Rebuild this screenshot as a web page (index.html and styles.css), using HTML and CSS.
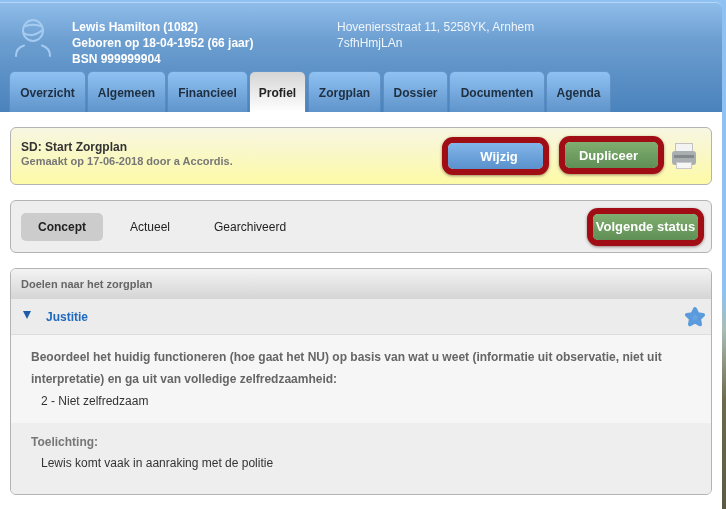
FILE: index.html
```html
<!DOCTYPE html>
<html lang="nl">
<head>
  <meta charset="UTF-8">
  <meta name="viewport" content="width=device-width, initial-scale=1">
  <title>Zorgplan</title>
  <link rel="stylesheet" href="styles.css">
</head>
<body>

<div class="app">
  <header class="top">
    <div class="head">
      <div class="client">
        <svg class="avatar" width="40" height="40" viewBox="0 0 40 40" fill="none" stroke="#a5cbf0" stroke-width="2">
          <ellipse cx="20" cy="11.500" rx="10" ry="10.500"/>
          <path d="M11 7.500c5-2.500 13-2.500 18 0M10.500 14c6 3.500 13 2 19-3"/>
          <path d="M3 37c0-6 3-9 8-10.500M37 37c0-6-3-9-8-10.500" stroke-linecap="round"/>
        </svg>
        <div class="client-name">
          <div>Lewis Hamilton (1082)</div>
          <div>Geboren op 18-04-1952 (66 jaar)</div>
          <div>BSN 999999904</div>
        </div>
        <div class="client-address">
          <div>Hoveniersstraat 11, 5258YK, Arnhem</div>
          <div>7sfhHmjLAn</div>
        </div>
      </div>
      <nav class="tabs">
        <a class="tab tab-overzicht">Overzicht</a>
        <a class="tab tab-algemeen">Algemeen</a>
        <a class="tab tab-financieel">Financieel</a>
        <a class="tab tab-profiel active">Profiel</a>
        <a class="tab tab-zorgplan">Zorgplan</a>
        <a class="tab tab-dossier">Dossier</a>
        <a class="tab tab-documenten">Documenten</a>
        <a class="tab tab-agenda">Agenda</a>
      </nav>
    </div>
  </header>

  <main class="content">
    <section class="card plan">
      <div class="plan-text">
        <h2>SD: Start Zorgplan</h2>
        <p>Gemaakt op 17-06-2018 door a Accordis.</p>
      </div>
      <button class="btn blue btn-wijzig">Wijzig</button>
      <button class="btn green btn-dupliceer">Dupliceer</button>
      <svg class="printer" width="24" height="26" viewBox="0 0 24 26">
        <rect x="3.500" y=".5" width="17" height="10" fill="#f3f3f3" stroke="#c2c2c2"/>
        <rect x="0" y="8" width="24" height="14" rx="3" fill="#a9aeb1"/>
        <rect x="2" y="12" width="20" height="3" fill="#83888c"/>
        <rect x="4.500" y="19.500" width="15" height="6" fill="#f6f6f6" stroke="#c9c9c9"/>
      </svg>
    </section>

    <section class="card status">
      <a class="status-item current">Concept</a>
      <a class="status-item actueel">Actueel</a>
      <a class="status-item">Gearchiveerd</a>
      <button class="btn green btn-volgende">Volgende status</button>
    </section>

    <section class="card goals">
      <div class="goals-head">Doelen naar het zorgplan</div>
      <div class="goal-title">
        <span class="arrow"></span>
        <span class="goal-name">Justitie</span>
        <svg class="star" width="22" height="21" viewBox="0 0 22 21">
          <path d="M11 3l2.500 5.200 5.500.7-4 3.900 1 5.500-5-2.700-5 2.700 1-5.500-4-3.900 5.500-.7z" fill="#66a3e0" stroke="#5b9bdc" stroke-width="4" stroke-linejoin="round"/>
        </svg>
      </div>
      <div class="question">
        <p class="label">Beoordeel het huidig functioneren (hoe gaat het NU) op basis van wat u weet (informatie uit observatie, niet uit interpretatie) en ga uit van volledige zelfredzaamheid:</p>
        <p class="answer">2 - Niet zelfredzaam</p>
      </div>
      <div class="note">
        <p class="note-label">Toelichting:</p>
        <p class="answer">Lewis komt vaak in aanraking met de politie</p>
      </div>
    </section>
  </main>
</div>

<div class="desktop"></div>

</body>
</html>
```

FILE: styles.css
```css
html, body {
  height: 100%;
}
body {
  margin: 0;
  display: flex;
  overflow: hidden;
  background: #fff;
  font-family: "Liberation Sans", Arial, sans-serif;
  font-size: 12px;
  color: #333;
}
.app {
  width: 722px;
  flex: none;
  filter: blur(.3px);
}
.desktop {
  flex: 1;
  background: linear-gradient(#8fc1f2 0, #8fc1f2 290px, #a9bdb4 330px, #6d6b4c 400px, #5c5a42 509px);
}

/* header */
.top {
  height: 112px;
  padding-top: 2px;
  box-sizing: border-box;
  background: #8fc1f2;
}
.head {
  height: 110px;
  box-sizing: border-box;
  border-top: 1px solid #b5d6f6;
  border-top-right-radius: 6px;
  background: linear-gradient(#8fbdea, #6c9ed0 38px, #4a82bc 110px);
  display: flex;
  flex-direction: column;
}
.client {
  flex: 1;
  display: flex;
  padding: 16px 0 0 13px;
  line-height: 16px;
  color: #fff;
}
.avatar {
  flex: none;
}
.client-name {
  width: 265px;
  margin-left: 19px;
  font-weight: bold;
}
.client-address {
  color: #eef5fc;
}
.tabs {
  display: flex;
  height: 40px;
  padding-left: 10px;
}
.tab {
  display: block;
  box-sizing: border-box;
  padding-top: 14px;
  margin-right: 3px;
  border-radius: 5px 5px 0 0;
  text-align: center;
  font-weight: bold;
  color: #1f2f40;
  background: linear-gradient(#8fc1f3, #5f94ca);
  box-shadow: 0 0 1px rgba(255, 255, 255, .5);
}
.tab-overzicht { width: 75px; }
.tab-algemeen { width: 77px; }
.tab-financieel { width: 79px; }
.tab-profiel { width: 55px; margin-right: 4px; }
.tab-zorgplan { width: 71px; margin-right: 4px; }
.tab-dossier { width: 63px; }
.tab-documenten { width: 94px; }
.tab-agenda { width: 63px; }
.tab.active {
  color: #222;
  background: linear-gradient(#d5d5d5, #fff);
}

/* cards */
.content {
  padding: 15px 10px 0;
}
.card {
  border: 1px solid #b3b3b3;
  border-radius: 6px;
  box-sizing: border-box;
  margin-bottom: 15px;
}
.plan {
  height: 58px;
  display: flex;
  align-items: center;
  background: linear-gradient(#f7f6e2, #fdfaa6);
}
.plan-text {
  flex: 1;
  padding: 0 0 4px 10px;
}
.plan-text h2 {
  margin: 0;
  font-size: 12px;
  line-height: 15px;
  color: #333;
}
.plan-text p {
  margin: 0;
  font-size: 11px;
  line-height: 13px;
  font-weight: bold;
  color: #777;
}
.btn {
  display: block;
  box-sizing: border-box;
  height: 26px;
  padding: 0;
  border: none;
  border-radius: 5px;
  color: #fff;
  font: bold 13px "Liberation Sans", Arial, sans-serif;
  box-shadow: 0 0 0 6px #a10d15, 0 1px 3px 6px rgba(70, 20, 20, .5);
}
.blue { background: linear-gradient(#82b6ea, #5a91cc); }
.green { background: linear-gradient(#80ae70, #5f8f55); }
.btn-wijzig {
  width: 95px;
  padding-left: 7px;
  margin-right: 22px;
}
.btn-dupliceer {
  width: 93px;
  padding-right: 6px;
  margin: -2px 14px 0 0;
}
.printer {
  margin: -1px 15px 0 0;
  flex: none;
}
.status {
  height: 53px;
  display: flex;
  align-items: center;
  padding-left: 10px;
  background: #eee;
}
.status-item {
  padding: 0 17px;
  height: 28px;
  line-height: 28px;
  color: #222;
  border-radius: 5px;
  margin-right: 10px;
}
.status-item.current {
  background: #ccc;
  font-weight: bold;
}
.status-item.actueel {
  padding-left: 0;
  padding-right: 0;
  margin: 0 27px 0 17px;
}
.btn-volgende {
  width: 105px;
  margin-left: auto;
  margin-right: 13px;
  white-space: nowrap;
}

/* doelen */
.goals {
  height: 227px;
  overflow: hidden;
  background: #f6f6f6;
  margin-bottom: 0;
}
.goals-head {
  height: 30px;
  padding-left: 10px;
  line-height: 30px;
  font-size: 11px;
  font-weight: bold;
  color: #666;
  background: linear-gradient(#f3f3f3, #d5d5d5);
}
.goal-title {
  height: 36px;
  display: flex;
  align-items: center;
  padding: 0 5px 0 12px;
  background: #ececec;
  border-bottom: 1px solid #ddd;
  box-sizing: border-box;
}
.arrow {
  width: 0;
  height: 0;
  margin-bottom: 3px;
  border-left: 4px solid transparent;
  border-right: 4px solid transparent;
  border-top: 8px solid #1c5fa8;
}
.goal-name {
  flex: 1;
  margin-left: 15px;
  color: #1f69be;
  font-weight: bold;
}
.question {
  height: 88px;
  padding: 11px 20px 0;
  box-sizing: border-box;
}
.label {
  margin: 0;
  line-height: 22px;
  font-weight: bold;
  color: #666;
}
.answer {
  margin: 0;
  padding-left: 10px;
  line-height: 22px;
  color: #333;
}
.note {
  height: 72px;
  padding: 9px 20px 0;
  box-sizing: border-box;
  background: #eee;
}
.note-label {
  margin: 0;
  line-height: 20px;
  font-weight: bold;
  color: #777;
}
```
